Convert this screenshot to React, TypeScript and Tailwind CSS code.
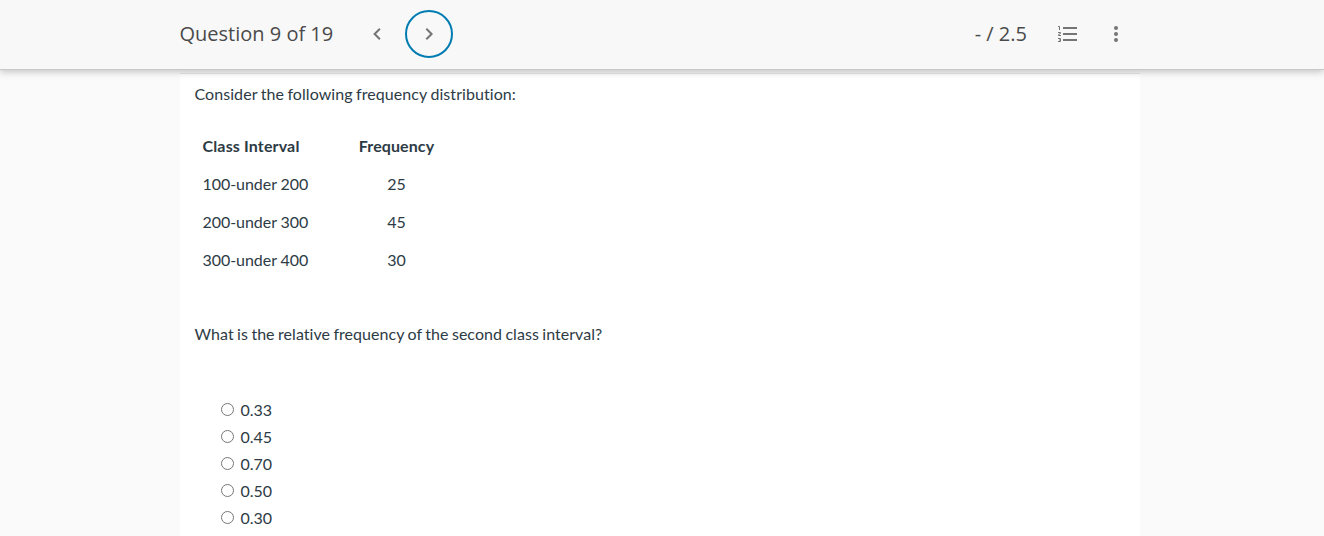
import { useState } from "react"

const rows = [
  { interval: "100-under 200", frequency: 25 },
  { interval: "200-under 300", frequency: 45 },
  { interval: "300-under 400", frequency: 30 },
]

const options = ["0.33", "0.45", "0.70", "0.50", "0.30"]

function QuestionHeader() {
  return (
    <header className="relative z-10 h-[70px] border-b border-[#c9c9c9] bg-[#f8f8f8] shadow-[0_2px_7px_rgba(0,0,0,0.22)]">
      <div className="ml-[180px] flex h-[68px] w-[960px] items-center font-['Open_Sans',sans-serif] text-[20px] text-[#4a4a4a]">
        <h1 className="-ml-[0.5px] w-[173.5px] whitespace-nowrap">Question 9 of 19</h1>
        <button aria-label="Previous question" className="flex h-12 w-12 items-center justify-center">
          <svg width="10" height="14" viewBox="0 0 10 14" fill="none" stroke="#757575" strokeWidth="2">
            <path d="M7.9 1.7 2.6 7l5.3 5.3" />
          </svg>
        </button>
        <button
          aria-label="Next question"
          className="ml-1 flex h-12 w-12 items-center justify-center rounded-full border-2 border-[#007cb2]"
        >
          <svg width="10" height="14" viewBox="0 0 10 14" fill="none" stroke="#757575" strokeWidth="2">
            <path d="M2.3 1.7 7.6 7l-5.3 5.3" />
          </svg>
        </button>
        <span className="ml-auto">- / 2.5</span>
        <button aria-label="Question list" className="ml-[31px]">
          <svg width="20" height="18" viewBox="0 0 20 18" fill="none" stroke="#757575">
            <path d="M5 3h14M5 9h14M5 15h14" strokeWidth="2" />
            <path d="M0 1.5h1.5V5M0 7.5h2.5v1L.5 9.5v1H3M0 13.5h2.5v3H0M1 15h1.5" />
          </svg>
        </button>
        <button aria-label="More options" className="mr-[22px] ml-[35px]">
          <svg width="5" height="18" viewBox="0 0 5 18" fill="#757575">
            <circle cx="3" cy="3" r="2" />
            <circle cx="3" cy="9" r="2" />
            <circle cx="3" cy="15" r="2" />
          </svg>
        </button>
      </div>
    </header>
  )
}

export default function App() {
  const [answer, setAnswer] = useState("")

  return (
    <div className="h-[536px] overflow-hidden bg-[#fafafa] font-[Lato,sans-serif] text-[16px] leading-6 text-[#2d3b45] [font-variant-ligatures:none]">
      <QuestionHeader />
      <main className="ml-[180px] h-[466px] w-[960px] bg-white">
        <div className="h-1 border-b border-[#e8e8e8] bg-[#f8f8f8]" />
        <div className="pt-2 pl-[14.5px]">
          <p className="tracking-[0.065px] [word-spacing:-0.7px]">Consider the following frequency distribution:</p>
          <table className="mt-[21px] border-collapse">
            <thead>
              <tr className="h-[38px]">
                <th className="w-[141px] pl-2 text-left font-bold tracking-[0.15px]">Class Interval</th>
                <th className="w-[122px] text-center font-bold tracking-[0.1px]">Frequency</th>
              </tr>
            </thead>
            <tbody>
              {rows.map((row) => (
                <tr key={row.interval} className="h-[38px]">
                  <td className="pl-2 tracking-[-0.05px]">{row.interval}</td>
                  <td className="text-center">{row.frequency}</td>
                </tr>
              ))}
            </tbody>
          </table>
          <p className="mt-[43px] tracking-[0.04px] [word-spacing:-0.7px]">
            What is the relative frequency of the second class interval?
          </p>
          <div className="mt-[50px] flex flex-col pl-[26.5px]">
            {options.map((option) => (
              <label key={option} className="flex h-[27px] items-center gap-[6.5px]">
                <input
                  type="radio"
                  name="answer"
                  value={option}
                  checked={answer === option}
                  onChange={() => setAnswer(option)}
                  className="h-[13px] w-[13px]"
                />
                {option}
              </label>
            ))}
          </div>
        </div>
      </main>
    </div>
  )
}
